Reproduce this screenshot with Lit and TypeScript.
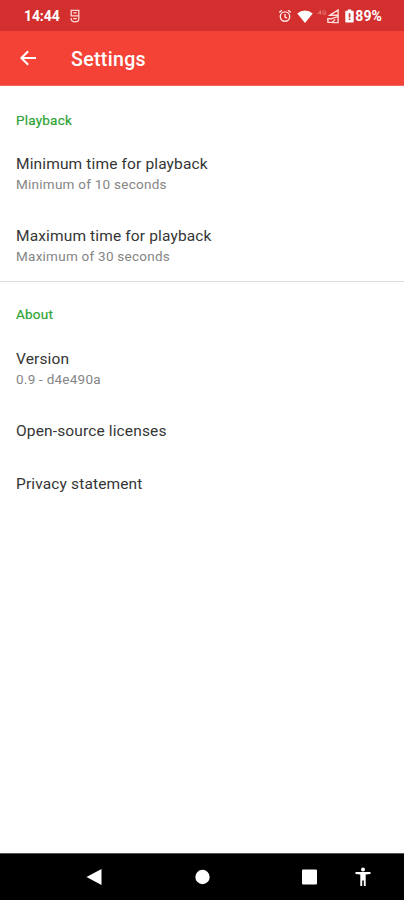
import { LitElement, html, css, nothing } from "lit";
import { customElement, property } from "lit/decorators.js";

@customElement("status-bar")
class StatusBar extends LitElement {
  static styles = css`
    :host { display: flex; align-items: center; height: 31px; flex: none; background: #d32f2f; color: #fff;
      padding: 0 22px 0 24px; box-sizing: border-box; font-weight: 700; }
    .time { font-size: 14px; line-height: 20px; letter-spacing: -0.1px; padding-top: 1px; }
    .note { margin: 1px 0 0 10px; }
    .right { margin-left: auto; display: flex; align-items: center; padding-top: 1px; }
    .wifi { margin-left: 5px; }
    .cell { margin-left: 4px; }
    .battery { margin-left: 5px; }
    .level { font-size: 14px; line-height: 20px; letter-spacing: 0.1px; margin-left: 1px; }
    svg { display: block; flex: none; }
  `;
  render() {
    return html`
      <span class="time">14:44</span>
      <svg class="note" width="10" height="14" viewBox="0 0 10 14" fill="none" stroke="#ffd9d6" stroke-width="1.3">
        <path d="M8.8 6.8V1.3H1.2v5.5h7.6v3.1q0 2.9-3.8 2.9T1.2 9.9V9M3.3 3.9h3.4M3.2 9.6h3.6"/>
      </svg>
      <div class="right">
        <svg width="14" height="14" viewBox="0 0 13 14" fill="none" stroke="#ffe5e3" stroke-width="1.4">
          <circle cx="6.5" cy="7.6" r="4.7"/>
          <path d="M.8 3.4 3.5 1.2M12.2 3.4 9.5 1.2M6.5 5v3l2 1.2"/>
        </svg>
        <svg class="wifi" width="16" height="13" viewBox="0 0 16 13" fill="#fff">
          <path d="M8 13 .3 3.5Q3.6.6 8 .6t7.7 2.9z"/>
        </svg>
        <svg class="cell" width="23" height="15" viewBox="0 0 22 15">
          <g fill="none" stroke="#e77f7b" stroke-width=".9">
            <path d="M3 5.5V1.6L.5 4.3h3.3M8.2 2.2Q5.2.8 5.2 3.5t3 1.6V3.6H7"/>
          </g>
          <g fill="none" stroke="#ffdad8" stroke-width="1.4">
            <path d="M12.5 6.2 20.6 1v5.2zM9.5 9.8h4.2l6.9-2.4v6.2h-6M9.8 13.4h4.8l3-2.8M10.4 9.8v3.6"/>
          </g>
        </svg>
        <svg class="battery" width="9" height="14" viewBox="0 0 9 14">
          <path fill="#fff" d="M2.8.5h3.4v1.3H8q.7 0 .7.7v10.3q0 .7-.7.7H1q-.7 0-.7-.7V2.5q0-.7.7-.7h1.8z"/>
          <path fill="#d32f2f" d="M3.7 4.2h1.7v4.2H3.7zM3.7 9.6h1.7v1.5H3.7z"/>
        </svg>
        <span class="level">89%</span>
      </div>`;
  }
}

@customElement("app-bar")
class AppBar extends LitElement {
  static styles = css`
    :host { display: flex; align-items: center; height: 55px; flex: none; background: #f44336; color: #fff;
      padding-left: 20px; box-sizing: border-box; border-bottom: 1px solid #ee6a5c; }
    svg { display: block; }
    .title { margin-left: 35px; padding-top: 3px; font-size: 19.5px; font-weight: 500; line-height: 26px;
      letter-spacing: 0.35px; }
  `;
  render() {
    return html`
      <svg width="16" height="16" viewBox="0 0 16 16" fill="none" stroke="#fff" stroke-width="2">
        <path d="M16 8H1.6M8.2 1.2 1.4 8l6.8 6.8"/>
      </svg>
      <span class="title">Settings</span>`;
  }
}

@customElement("pref-item")
class PrefItem extends LitElement {
  @property() label = "";
  @property() summary = "";
  static styles = css`
    :host { display: block; padding: 17px 16px 15px; }
    .label { font-size: 15.5px; line-height: 20px; letter-spacing: 0.14px; color: #353535; }
    .label:last-child { padding-bottom: 1px; }
    .summary { font-size: 13.5px; line-height: 20px; letter-spacing: 0.25px; color: #858585; }
  `;
  render() {
    return html`<div class="label">${this.label}</div>
      ${this.summary ? html`<div class="summary">${this.summary}</div>` : nothing}`;
  }
}

@customElement("nav-bar")
class NavBar extends LitElement {
  static styles = css`
    :host { display: flex; align-items: center; height: 47px; flex: none; background: #000; box-sizing: border-box;
      border-top: 1px solid #555; padding: 0 0 0 86px; }
    svg { display: block; fill: #fff; }
    .home { margin-left: 93px; }
    .recent { margin-left: 92px; }
    .access { margin-left: 38px; }
  `;
  render() {
    return html`
      <svg width="16" height="18" viewBox="0 0 16 18"><path d="M15.5 1v16L.5 9z"/></svg>
      <svg class="home" width="15" height="16" viewBox="0 0 15 16"><circle cx="7.5" cy="8" r="7.2"/></svg>
      <svg class="recent" width="15" height="16" viewBox="0 0 15 16"><rect y=".5" width="15" height="15" rx="1"/></svg>
      <svg class="access" width="16" height="20" viewBox="0 0 16 20">
        <circle cx="8" cy="2.6" r="2"/>
        <path d="M.5 5h15v1.9l-4.8.6V19H8.8v-5.6H7.2V19H5.3V7.5L.5 6.9z"/>
      </svg>`;
  }
}

@customElement("app-root")
class AppRoot extends LitElement {
  static styles = css`
    :host { display: flex; flex-direction: column; height: 900px; background: #fff;
      font-family: Roboto, "Noto Sans", sans-serif; }
    main { flex: 1; min-height: 0; }
    h2 { margin: 0; padding: 24px 16px 7px; font-size: 13.5px; line-height: 20px; font-weight: 400;
      letter-spacing: 0.22px; color: #2ca334; -webkit-text-stroke: 0.2px #2ca334; }
    section + section { border-top: 1px solid #dedede; }
    section + section h2 { padding: 22px 16px 8px; }
  `;
  render() {
    return html`
      <status-bar></status-bar>
      <app-bar></app-bar>
      <main>
        <section>
          <h2>Playback</h2>
          <pref-item label="Minimum time for playback" summary="Minimum of 10 seconds"></pref-item>
          <pref-item label="Maximum time for playback" summary="Maximum of 30 seconds"></pref-item>
        </section>
        <section>
          <h2>About</h2>
          <pref-item label="Version" summary="0.9 - d4e490a"></pref-item>
          <pref-item label="Open-source licenses"></pref-item>
          <pref-item label="Privacy statement"></pref-item>
        </section>
      </main>
      <nav-bar></nav-bar>`;
  }
}
